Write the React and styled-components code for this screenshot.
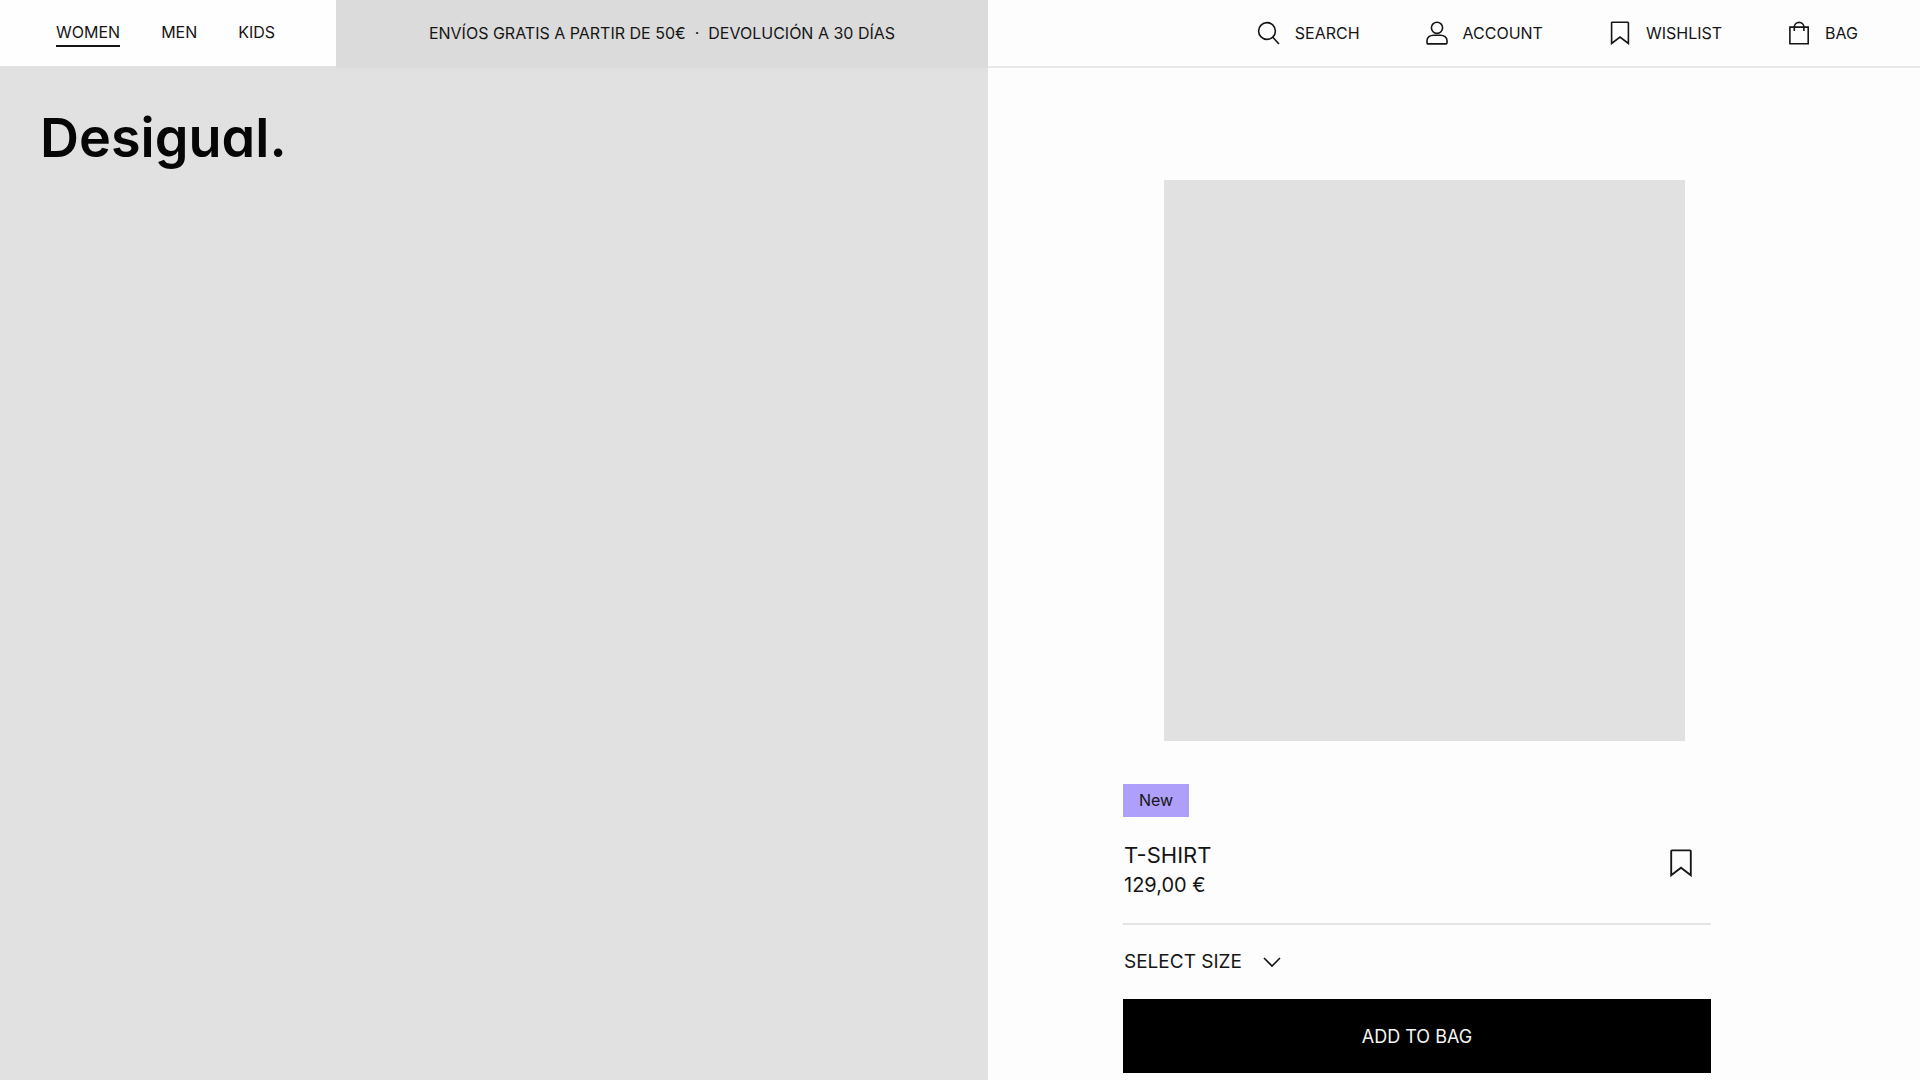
import styled, { createGlobalStyle } from 'styled-components';

const GlobalStyle = createGlobalStyle`
    * {
        box-sizing: border-box;
    }

    body {
        margin: 0;
        background-color: #fdfdfd;
        color: #151515;
        font-family: Inter, "Liberation Sans", Arial, sans-serif;
        font-optical-sizing: none;
        font-size: 16px;
    }

    a {
        color: inherit;
        text-decoration: none;
    }

    button, select {
        border: none;
        padding: 0;
        background: none;
        color: inherit;
        font-family: inherit;
        cursor: pointer;
    }
`

const Page = styled.div`
    display: flex;
    flex-direction: column;
    min-height: 100vh;
`

const Header = styled.header`
    display: grid;
    grid-template-columns: 988fr 932fr;
    height: 68px;
    line-height: 20px;
`

const HeaderLeft = styled.div`
    display: flex;
`

const CategoryNav = styled.nav`
    display: flex;
    align-items: center;
    gap: 41px;
    width: 336px;
    padding-left: 56px;
    background-color: #fefefe;
    border-bottom: 2px solid #e1e1e1;
`

const Category = styled.a`
    padding: 3px 0;
    border-bottom: 2px solid ${({ $active }) => ($active ? '#151515' : 'transparent')};
`

const Promo = styled.p`
    display: flex;
    flex: 1;
    align-items: center;
    justify-content: center;
    margin: 0;
    padding-bottom: 3px;
    background-color: #dbdbdb;
`

const UserNav = styled.nav`
    display: flex;
    align-items: center;
    justify-content: flex-end;
    gap: 65px;
    padding-right: 62px;
    border-bottom: 2px solid #e8e8e8;
`

const UserLink = styled.a`
    display: flex;
    align-items: center;
    gap: 14px;
`

const Main = styled.main`
    display: grid;
    grid-template-columns: 988fr 932fr;
    flex: 1;
`

const Hero = styled.section`
    padding: 34px 40px;
    background-color: #e1e1e1;
`

const Logo = styled.a`
    color: #060606;
    font-size: 54px;
    font-weight: 600;
    font-optical-sizing: auto;
    line-height: 72px;
    font-feature-settings: "cv11";
`

const Product = styled.section`
    padding: 112px 20px 7px 135px;
`

const Details = styled.div`
    max-width: 588px;
`

const Photo = styled.div`
    max-width: 521px;
    height: 561px;
    margin: 0 auto 43px 41px;
    background-color: #e1e1e1;
`

const Tag = styled.span`
    display: block;
    width: fit-content;
    padding: 0 16px;
    background-color: #ae9ffb;
    font-size: 16px;
    line-height: 33px;
`

const Summary = styled.div`
    display: flex;
    align-items: flex-start;
    justify-content: space-between;
    padding: 23px 16px 23px 1px;
    border-bottom: 2px solid #e4e4e4;
`

const Name = styled.h1`
    margin: 0;
    font-size: 22px;
    font-weight: 400;
    line-height: 30px;
`

const Price = styled.p`
    margin: 0;
    font-size: 20px;
    line-height: 30px;
`

const SaveButton = styled.button`
    margin-top: 9px;
`

const SizeField = styled.div`
    display: flex;
    align-items: center;
    gap: 18px;
    height: 74px;
    padding-left: 1px;
`

const SizeSelect = styled.select`
    appearance: none;
    font-size: 19px;
    line-height: 24px;
`

const AddButton = styled.button`
    width: 100%;
    height: 74px;
    background-color: #000;
    color: #f4f4f4;
    font-size: 18px;
`

const Icon = styled.svg`
    display: block;
    width: ${({ $size = 24 }) => $size}px;
    height: ${({ $size = 24 }) => $size}px;
    fill: none;
    stroke: currentColor;
    stroke-width: 1.6;
`

const SearchIcon = () => (
    <Icon viewBox="0 0 24 24">
        <circle cx="10" cy="10" r="8.4" />
        <path d="M15.8 16.2 22 23" />
    </Icon>
)

const AccountIcon = () => (
    <Icon viewBox="0 0 24 24">
        <circle cx="12" cy="6.8" r="5.6" />
        <path d="M8.5 14.2h7c3.5 0 6.500 2.200 6.500 5.300v2.300c0 .7-.4 1.100-1.100 1.100H3.100c-.7 0-1.100-.4-1.100-1.100v-2.300c0-3.100 3-5.300 6.500-5.300Z" />
    </Icon>
)

const BookmarkIcon = ({ size }) => (
    <Icon viewBox="0 0 24 24" $size={size}>
        <path d="M4.3 1.200h15.400c.4 0 .7.300.7.700V22.500L12 16l-8.400 6.500V1.900c0-.4.300-.7.700-.7Z" />
    </Icon>
)

const BagIcon = () => (
    <Icon viewBox="0 0 24 24">
        <path d="M2.900 6.100h18.300v16.700H2.900Z" />
        <path d="M7.300 10V6.200a4.800 4.800 0 0 1 9.600 0V10" />
    </Icon>
)

const categories = ['WOMEN', 'MEN', 'KIDS']

const userLinks = [
    { label: 'SEARCH', icon: <SearchIcon /> },
    { label: 'ACCOUNT', icon: <AccountIcon /> },
    { label: 'WISHLIST', icon: <BookmarkIcon /> },
    { label: 'BAG', icon: <BagIcon /> },
]

function App () {
    return (
        <Page>
            <GlobalStyle />
            <Header>
                <HeaderLeft>
                    <CategoryNav>
                        {categories.map((name, i) => (
                            <Category key={name} href="#" $active={i === 0}>{name}</Category>
                        ))}
                    </CategoryNav>
                    <Promo>ENVÍOS GRATIS A PARTIR DE 50€ &nbsp;·&nbsp; DEVOLUCIÓN A 30 DÍAS</Promo>
                </HeaderLeft>
                <UserNav>
                    {userLinks.map(({ label, icon }) => (
                        <UserLink key={label} href="#">{icon}{label}</UserLink>
                    ))}
                </UserNav>
            </Header>

            <Main>
                <Hero>
                    <Logo href="#">Desigual.</Logo>
                </Hero>
                <Product>
                    <Photo />
                    <Details>
                        <Tag>New</Tag>
                        <Summary>
                            <div>
                                <Name>T-SHIRT</Name>
                                <Price>129,00 €</Price>
                            </div>
                            <SaveButton type="button" aria-label="Add to wishlist">
                                <BookmarkIcon size={28} />
                            </SaveButton>
                        </Summary>
                        <SizeField>
                            <SizeSelect aria-label="Size">
                                <option>SELECT SIZE</option>
                                <option>S</option>
                                <option>M</option>
                                <option>L</option>
                            </SizeSelect>
                            <Icon viewBox="0 0 24 24">
                                <path d="m4 8 8 8 8-8" />
                            </Icon>
                        </SizeField>
                        <AddButton type="button">ADD TO BAG</AddButton>
                    </Details>
                </Product>
            </Main>
        </Page>
    )
}

export default App;
